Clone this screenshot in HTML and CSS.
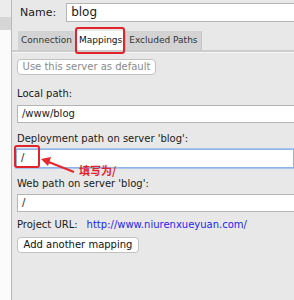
FILE: index.html
```html
<!DOCTYPE html>
<html>
<head>
<meta charset="utf-8">
<link rel="stylesheet" href="styles.css">
</head>
<body>
<div class="window">
  <aside class="sidebar">
    <div class="side-head"></div>
    <div class="side-sel"></div>
    <div class="side-list"></div>
  </aside>
  <main class="panel">
    <div class="name-row">
      <span class="label">Name:</span>
      <div class="input name-input">blog</div>
    </div>
    <div class="tabs">
      <div class="tab">Connection</div>
      <div class="tab active">Mappings</div>
      <div class="tab">Excluded Paths</div>
    </div>
    <div class="content">
      <div class="btn disabled">Use this server as default</div>
      <div class="label field-label first">Local path:</div>
      <div class="input">/www/blog</div>
      <div class="label field-label">Deployment path on server 'blog':</div>
      <div class="input focused">/</div>
      <div class="label field-label">Web path on server 'blog':</div>
      <div class="input">/</div>
      <div class="url-row">
        <span class="label">Project URL:</span>
        <span class="link">http://www.niurenxueyuan.com/</span>
      </div>
      <div class="btn">Add another mapping</div>
    </div>
  </main>
  <div class="mark mark-tab"></div>
  <div class="mark mark-input"></div>
  <svg class="arrow" width="40" height="20" viewBox="0 0 40 20">
    <line x1="34" y1="16" x2="6" y2="5" stroke="#e8262c" stroke-width="2"/>
    <polygon points="1,3 11,1 8,10" fill="#e8262c"/>
  </svg>
  <div class="note">填写为/</div>
</div>
</body>
</html>
```
FILE: styles.css
```css
* { box-sizing: border-box; }
html, body { margin: 0; padding: 0; }
body {
  width: 294px;
  height: 300px;
  overflow: hidden;
  font-family: "DejaVu Sans", "Noto Sans CJK SC", sans-serif;
  font-size: 10px;
  line-height: 12px;
  color: #1a1a1a;
  background: #e8e8e8;
}
.window {
  position: relative;
  display: flex;
  width: 294px;
  height: 300px;
}
.sidebar {
  width: 12px;
  flex: none;
  display: flex;
  flex-direction: column;
  border-right: 1px solid #b9b9b9;
  background: #fbfbfb;
}
.side-head { height: 17px; background: #ececec; }
.side-sel { height: 13px; background: #d6d6d6; }
.side-list { flex: 1; background: #fbfbfb; }
.panel {
  flex: 1;
  min-width: 0;
  background: #e8e8e8;
  overflow: hidden;
}
.name-row {
  display: flex;
  align-items: center;
  gap: 10px;
  padding: 3px 0 0 8px;
  height: 22px;
}
.name-row .label { font-size: 11px; }
.label { white-space: nowrap; }
.input {
  height: 18px;
  background: #fff;
  border: 1px solid #b5b5b5;
  border-right: none;
  padding: 0 4px;
  line-height: 16px;
  white-space: nowrap;
}
.name-input {
  flex: 1;
  height: 19px;
  font-size: 12px;
  line-height: 17px;
}
.tabs {
  display: flex;
  margin-top: 9px;
  padding-left: 6px;
  height: 21px;
  border-bottom: 2px solid #cdcdcd;
  box-shadow: 0 1px 0 #f6f6f6;
}
.tab {
  height: 19px;
  padding: 0 3px;
  line-height: 19px;
  background: #d3d3d3;
  border-right: 1px solid #c4c4c4;
  font-size: 9px;
  color: #333;
}
.tab.active {
  background: #ffffff;
  color: #111;
}
.content {
  display: flex;
  flex-direction: column;
  align-items: stretch;
  padding: 7px 0 0 5px;
}
.btn {
  align-self: flex-start;
  height: 16px;
  padding: 0 10px;
  line-height: 14px;
  background: #fff;
  border: 1px solid #c2c2c2;
  border-radius: 4px;
  color: #111;
  white-space: nowrap;
}
.btn.disabled { color: #8a8a8a; width: 139px; padding: 0; text-align: center; }
.field-label { margin: 10px 0 4px 0; }
.field-label.first { margin: 13px 0 5px 0; }
.focused {
  height: 19px;
  margin-left: -1px;
  border: 1px solid #8fb4e6;
  box-shadow: 0 0 0 1px #a9c6ee;
}
.url-row {
  display: flex;
  gap: 9px;
  margin-top: 7px;
}
.link { color: #1e1ef0; }
.url-row + .btn { margin-top: 6px; width: 122px; padding: 0; text-align: center; }
.mark {
  position: absolute;
  border: 2px solid #e3232b;
  border-radius: 3px;
}
.mark-tab { left: 75px; top: 27px; width: 50px; height: 27px; }
.mark-input { left: 14px; top: 145px; width: 26px; height: 23px; }
.arrow { position: absolute; left: 40px; top: 156px; }
.note {
  position: absolute;
  left: 79px;
  top: 163px;
  color: #e3232b;
  font-size: 11px;
  line-height: 14px;
  font-weight: bold;
  font-family: "Noto Sans CJK SC", sans-serif;
}
```
